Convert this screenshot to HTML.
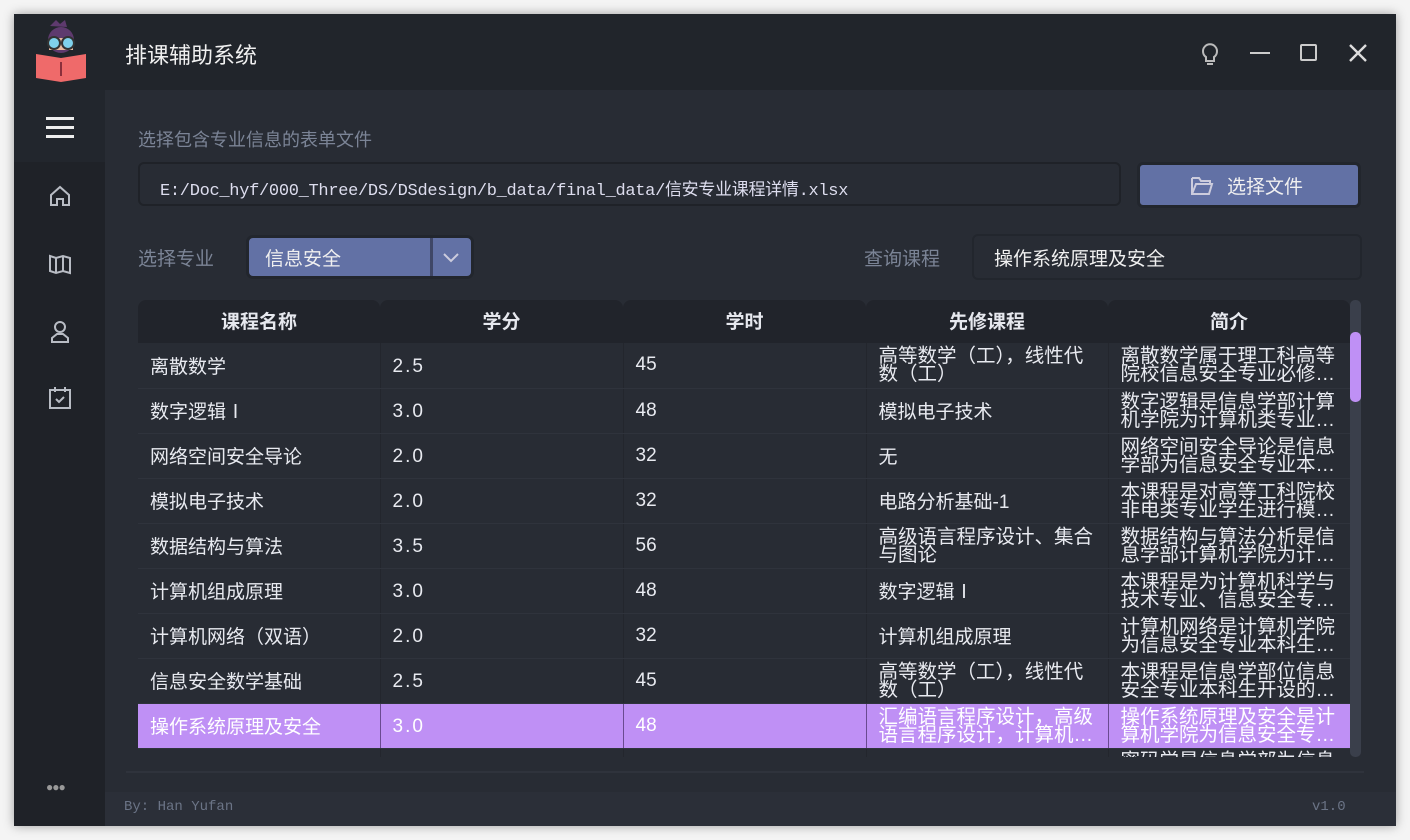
<!DOCTYPE html>
<html><head><meta charset="utf-8"><style>
*{margin:0;padding:0;box-sizing:border-box}
body{width:1410px;height:840px;background:#f4f4f4;position:relative;overflow:hidden;font-family:"Liberation Sans","Noto Sans CJK SC",sans-serif;color:#e6e8ee}
.win{position:absolute;left:14px;top:14px;width:1382px;height:812px;background:#282c34;box-shadow:0 0 10px rgba(0,0,0,.35)}
.title{position:absolute;left:0;top:0;width:1382px;height:76px;background:#21252b}
.side{position:absolute;left:0;top:76px;width:91px;height:736px;background:#1f2228}
.a{position:absolute}
.mono{font-family:"Liberation Mono","Noto Sans CJK SC",monospace}
table{border-collapse:collapse;table-layout:fixed}
td{height:45px;border-right:1px solid #23262d;border-bottom:1px solid #2f333c;font-size:19px;padding-left:12px;color:#e8eaf0;overflow:hidden;white-space:nowrap}
td.w{line-height:18px;font-size:19.5px;padding-right:0}
td.n{font-family:"Liberation Sans Narrow","Liberation Sans",sans-serif;letter-spacing:2px;padding-top:3px}
tr.sel td{background:#bf90f5;color:#fff;border-right:1px solid #6a4a90}
</style></head><body>
<div class="win">
<div class="title"></div>
<div class="side"></div>
<div class="a" style="left:0;top:76px;width:91px;height:72px;background:#22262d"></div>
<svg class="a" style="left:20px;top:4px" width="54" height="64" viewBox="0 0 54 64">
<path d="M16 8l6-6 4 4 5-4 2 7z" fill="#5e3a6e"/>
<circle cx="27" cy="22" r="13" fill="#5e3a6e"/>
<rect x="15" y="20" width="24" height="12" fill="#e9b9a0"/>
<circle cx="20" cy="25" r="6" fill="#7fd1ec" stroke="#333" stroke-width="2"/>
<circle cx="34" cy="25" r="6" fill="#7fd1ec" stroke="#333" stroke-width="2"/>
<path d="M2 36l25 4 25-4v24l-25 4-25-4z" fill="#ef6a6a"/>
<path d="M27 44v14" stroke="#8b2f3b" stroke-width="2"/>
</svg>
<div class="a" style="left:111px;top:24px;font-size:22px;color:#f0f0f0">排课辅助系统</div>
<svg class="a" style="left:1186px;top:28px" width="20" height="26" viewBox="0 0 20 26" fill="none" stroke="#bbb" stroke-width="2"><path d="M6 15a7 7 0 1 1 8 0v4H6z"/><path d="M7 22h6"/></svg>
<div class="a" style="left:1236px;top:38px;width:20px;height:2px;background:#ccc"></div>
<div class="a" style="left:1286px;top:30px;width:17px;height:17px;border:2px solid #ccc;border-radius:2px"></div>
<svg class="a" style="left:1334px;top:29px" width="20" height="20" stroke="#ddd" stroke-width="2.4"><path d="M2 2l16 16M18 2L2 18"/></svg>
<div class="a" style="left:32px;top:103px;width:28px;height:3px;background:#eee;box-shadow:0 9px #eee,0 18px #eee"></div>
<svg class="a" style="left:34px;top:170px" width="24" height="24" fill="none" stroke="#b8bcc4" stroke-width="2"><path d="M3 11L12 3l9 8v10h-6v-6h-6v6H3z"/></svg>
<svg class="a" style="left:34px;top:238px" width="24" height="24" fill="none" stroke="#b8bcc4" stroke-width="2"><path d="M2 4l6 2 7-2 7 2v15l-7-2-7 2-6-2zM8 6v15M15 4v15"/></svg>
<svg class="a" style="left:34px;top:305px" width="24" height="26" fill="none" stroke="#b8bcc4" stroke-width="2"><circle cx="12" cy="8" r="5"/><path d="M4 23v-4l5-4h6l5 4v4z"/></svg>
<svg class="a" style="left:34px;top:371px" width="24" height="26" fill="none" stroke="#b8bcc4" stroke-width="2"><rect x="2" y="5" width="20" height="18"/><path d="M7 2v5M17 2v5M8 14l3 3 5-5"/></svg>
<div class="a" style="left:32px;top:766px;font-size:12px;color:#999;letter-spacing:-1px">●●●</div>
<div class="a" style="left:124px;top:112px;font-size:18px;color:#7b8496">选择包含专业信息的表单文件</div>
<div class="a" style="left:124px;top:148px;width:983px;height:44px;border:2px solid #1f2228;border-radius:6px;background:#282c34"></div>
<div class="a mono" style="left:146px;top:161px;font-size:17px;color:#dde;letter-spacing:-0.3px">E:/Doc_hyf/000_Three/DS/DSdesign/b_data/final_data/信安专业课程详情.xlsx</div>
<div class="a" style="left:1123px;top:148px;width:224px;height:46px;border:3px solid #22262d;border-radius:6px;background:#6271a5"></div>
<svg class="a" style="left:1176px;top:160px" width="24" height="22" fill="none" stroke="#ccd" stroke-width="2"><path d="M2 4h7l2 3h9v3M2 4v16h17l3-10H6L2 20"/></svg>
<div class="a" style="left:1213px;top:158px;font-size:19px;color:#f0f0f0">选择文件</div>
<div class="a" style="left:124px;top:230px;font-size:19px;color:#7b8496">选择专业</div>
<div class="a" style="left:232px;top:221px;width:228px;height:44px;border:3px solid #22262d;border-radius:7px;background:#6271a5"></div>
<div class="a" style="left:416px;top:224px;width:3px;height:38px;background:#3f4767"></div>
<svg class="a" style="left:428px;top:238px" width="18" height="12" fill="none" stroke="#ccd" stroke-width="2"><path d="M2 2l7 7 7-7"/></svg>
<div class="a" style="left:251px;top:230px;font-size:19px;color:#f0f0f0">信息安全</div>
<div class="a" style="left:850px;top:230px;font-size:19px;color:#7b8496">查询课程</div>
<div class="a" style="left:958px;top:220px;width:390px;height:46px;border:2px solid #22262d;border-radius:6px"></div>
<div class="a" style="left:980px;top:230px;font-size:19px;color:#f0f0f0">操作系统原理及安全</div>
<div class="a" style="left:124px;top:286px;width:1212px;height:43px;display:flex;font-weight:bold;font-size:19px;line-height:45px;text-align:center">
<div style="width:242px;height:43px;background:#21242b;border-radius:8px 8px 0 0">课程名称</div>
<div style="width:243px;height:43px;background:#21242b;border-radius:8px 8px 0 0">学分</div>
<div style="width:243px;height:43px;background:#21242b;border-radius:8px 8px 0 0">学时</div>
<div style="width:242px;height:43px;background:#21242b;border-radius:8px 8px 0 0">先修课程</div>
<div style="width:242px;height:43px;background:#21242b;border-radius:8px 8px 0 0">简介</div>
</div>
<div class="a" style="left:124px;top:329px;width:1212px;height:414px;overflow:hidden">
<table style="width:1212px">
<colgroup><col style="width:242px"><col style="width:243px"><col style="width:243px"><col style="width:242px"><col style="width:242px"></colgroup>
<tr><td>离散数学</td><td class="n">2.5</td><td>45</td><td class="w">高等数学（工），线性代<br>数（工）</td><td class="w">离散数学属于理工科高等<br>院校信息安全专业必修…</td></tr>
<tr><td>数字逻辑Ⅰ</td><td class="n">3.0</td><td>48</td><td>模拟电子技术</td><td class="w">数字逻辑是信息学部计算<br>机学院为计算机类专业…</td></tr>
<tr><td>网络空间安全导论</td><td class="n">2.0</td><td>32</td><td>无</td><td class="w">网络空间安全导论是信息<br>学部为信息安全专业本…</td></tr>
<tr><td>模拟电子技术</td><td class="n">2.0</td><td>32</td><td>电路分析基础-1</td><td class="w">本课程是对高等工科院校<br>非电类专业学生进行模…</td></tr>
<tr><td>数据结构与算法</td><td class="n">3.5</td><td>56</td><td class="w">高级语言程序设计、集合<br>与图论</td><td class="w">数据结构与算法分析是信<br>息学部计算机学院为计…</td></tr>
<tr><td>计算机组成原理</td><td class="n">3.0</td><td>48</td><td>数字逻辑Ⅰ</td><td class="w">本课程是为计算机科学与<br>技术专业、信息安全专…</td></tr>
<tr><td>计算机网络（双语）</td><td class="n">2.0</td><td>32</td><td>计算机组成原理</td><td class="w">计算机网络是计算机学院<br>为信息安全专业本科生…</td></tr>
<tr><td>信息安全数学基础</td><td class="n">2.5</td><td>45</td><td class="w">高等数学（工），线性代<br>数（工）</td><td class="w">本课程是信息学部位信息<br>安全专业本科生开设的…</td></tr>
<tr class="sel"><td>操作系统原理及安全</td><td class="n">3.0</td><td>48</td><td class="w">汇编语言程序设计，高级<br>语言程序设计，计算机…</td><td class="w">操作系统原理及安全是计<br>算机学院为信息安全专…</td></tr>
<tr><td></td><td></td><td></td><td></td><td class="w" style="vertical-align:top;padding-top:3px">密码学是信息学部为信息</td></tr>
</table></div>
<div class="a" style="left:1336px;top:286px;width:11px;height:457px;background:#3a3f4b;border-radius:5px"></div>
<div class="a" style="left:1336px;top:318px;width:11px;height:70px;background:#bf90f5;border-radius:5px"></div>
<div class="a" style="left:112px;top:757px;width:1238px;height:2px;background:#2f333c"></div>
<div class="a" style="left:91px;top:778px;width:1291px;height:34px;background:#2b2f38"></div>
<div class="a mono" style="left:110px;top:785px;font-size:14px;color:#6b7486">By: Han Yufan</div>
<div class="a mono" style="left:1298px;top:785px;font-size:14px;color:#6b7486">v1.0</div>
</div>
</body></html>
